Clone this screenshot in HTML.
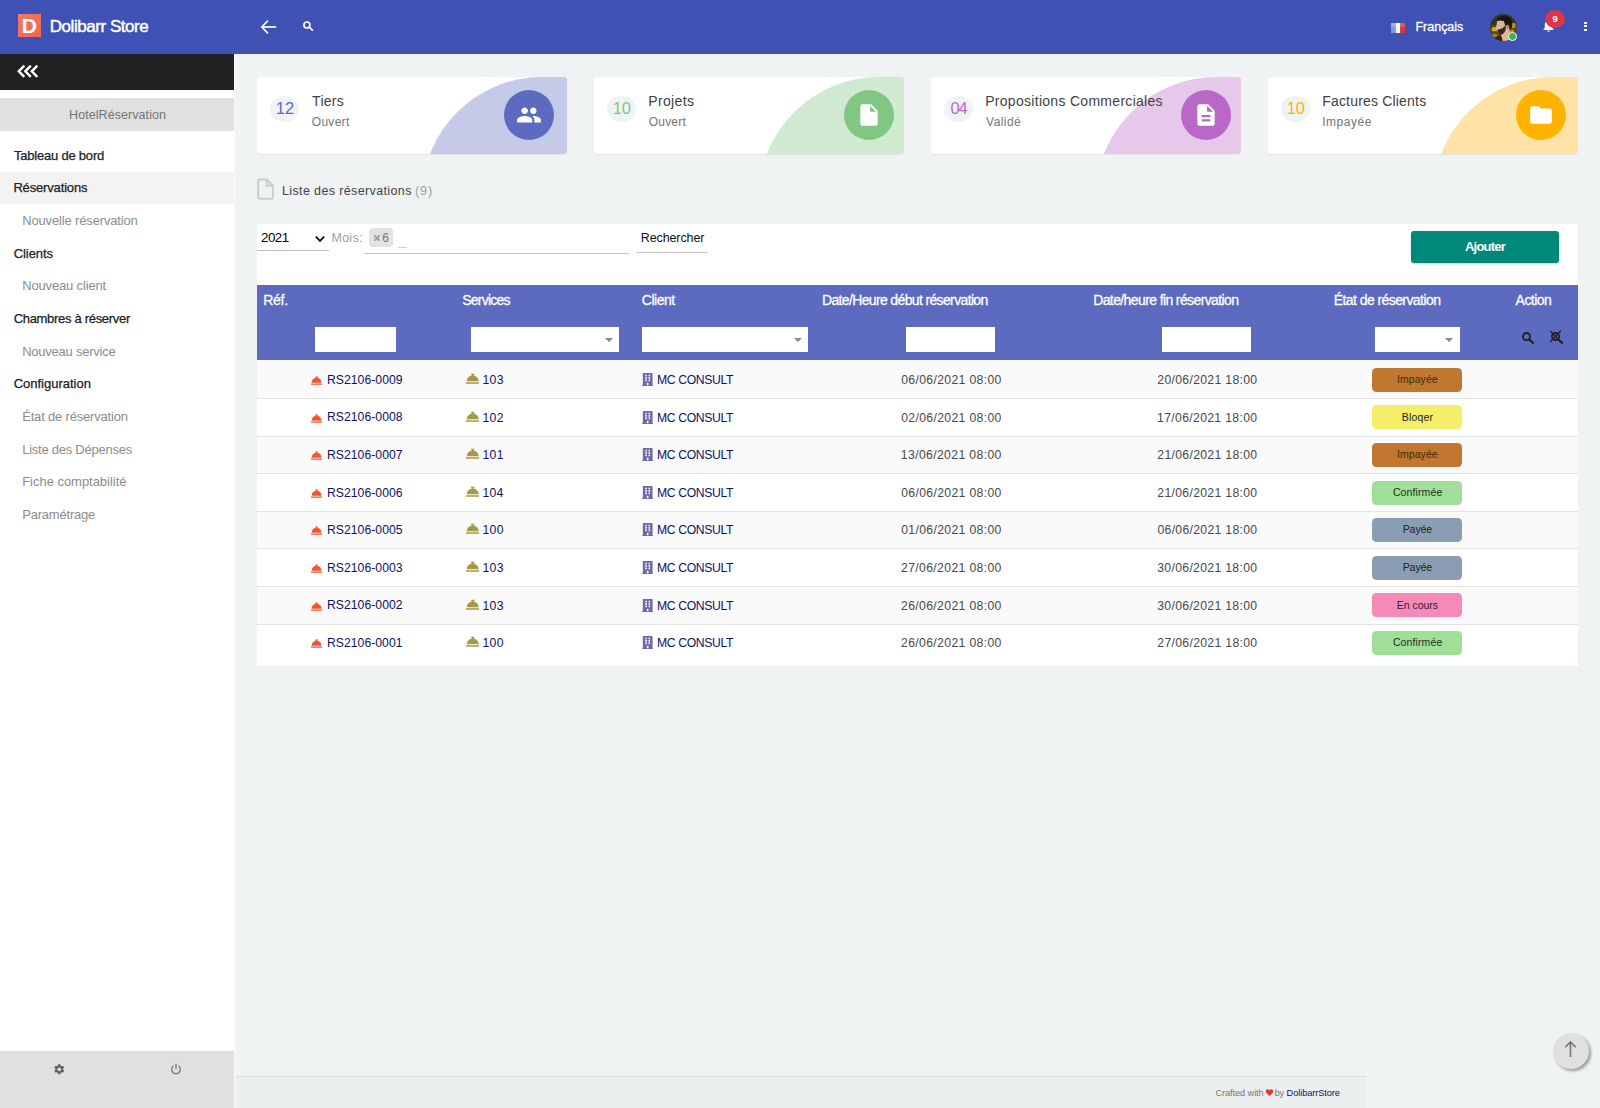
<!DOCTYPE html>
<html lang="fr">
<head>
<meta charset="utf-8">
<title>Liste des réservations</title>
<style>
html,body{margin:0;padding:0;}
body{width:1600px;height:1108px;position:relative;overflow:hidden;background:#f0f3f4;font-family:"Liberation Sans",sans-serif;}
.b{position:absolute;display:block;}
.t{position:absolute;white-space:pre;font-family:"Liberation Sans",sans-serif;}
.card{background:#fff;border-radius:3px;overflow:hidden;box-shadow:0 1px 1px rgba(0,0,0,.06);}
</style>
</head>
<body>
<!-- shapes -->
<div class="b" style="left:0px;top:54px;width:234px;height:1054px;background:#fff;"></div>
<div class="b" style="left:234px;top:54px;width:2px;height:1054px;background:linear-gradient(90deg,#f9fbfb,#f0f3f4);"></div>
<div class="b" style="left:0px;top:54px;width:234px;height:36px;background:#212121;"></div>
<div class="b" style="left:0px;top:98px;width:234px;height:33px;background:#e0e0e0;"></div>
<div class="b" style="left:0px;top:171.5px;width:234px;height:32.5px;background:#f3f3f3;"></div>
<div class="b" style="left:0px;top:1051px;width:234px;height:57px;background:#e0e0e0;"></div>
<div class="b" style="left:0px;top:0px;width:1600px;height:54px;background:#3f51b5;"></div>
<div class="b" style="left:18px;top:14px;width:23px;height:23px;background:linear-gradient(135deg,#f27a66,#ec6555);"></div>
<div class="b" style="left:235px;top:1076px;width:1131px;height:32px;background:#eceff0;border-top:1px solid #dcdfe0;box-sizing:border-box;"></div>
<div class="b card" style="left:257px;top:77px;width:310px;height:77px;"><div class="b" style="left:165.3px;top:0;width:150px;height:125px;border-radius:120px 0 0 0;background:#c5cae9"></div><div class="b" style="left:12.5px;top:19px;width:29px;height:25.5px;border-radius:50%;background:#f0f3f4"></div><div class="b" style="left:247px;top:12.8px;width:50px;height:50px;border-radius:50%;background:#5c6bc0"></div><div class="b" style="left:259px;top:25.3px;width:26px;height:26px"><svg viewBox="0 0 24 24" width="26" height="26"><path fill="#fff" d="M16 11c1.66 0 2.990-1.340 2.990-3S17.660 5 16 5c-1.660 0-3 1.340-3 3s1.340 3 3 3zm-8 0c1.660 0 2.990-1.340 2.990-3S9.660 5 8 5C6.340 5 5 6.340 5 8s1.340 3 3 3zm0 2c-2.330 0-7 1.170-7 3.500V19h14v-2.500c0-2.330-4.670-3.500-7-3.500zm8 0c-.290 0-.620.020-.970.050 1.160.840 1.970 1.970 1.970 3.450V19h6v-2.500c0-2.330-4.670-3.500-7-3.500z"/></svg></div></div>
<div class="b card" style="left:594px;top:77px;width:310px;height:77px;"><div class="b" style="left:165.3px;top:0;width:150px;height:125px;border-radius:120px 0 0 0;background:#d0e9d1"></div><div class="b" style="left:12.5px;top:19px;width:29px;height:25.5px;border-radius:50%;background:#f0f3f4"></div><div class="b" style="left:250px;top:12.8px;width:50px;height:50px;border-radius:50%;background:#81c784"></div><div class="b" style="left:262px;top:25.3px;width:26px;height:26px"><svg viewBox="0 0 24 24" width="26" height="26"><path fill="#fff" d="M6 2c-1.100 0-1.990.900-1.990 2L4 20c0 1.100.890 2 1.990 2H18c1.100 0 2-.900 2-2V8l-6-6H6zm7 7V3.500L18.500 9H13z"/></svg></div></div>
<div class="b card" style="left:931px;top:77px;width:310px;height:77px;"><div class="b" style="left:165.3px;top:0;width:150px;height:125px;border-radius:120px 0 0 0;background:#e6c8ea"></div><div class="b" style="left:12.5px;top:19px;width:29px;height:25.5px;border-radius:50%;background:#f0f3f4"></div><div class="b" style="left:250px;top:12.8px;width:50px;height:50px;border-radius:50%;background:#ba68c8"></div><div class="b" style="left:262px;top:25.3px;width:26px;height:26px"><svg viewBox="0 0 24 24" width="26" height="26"><path fill="#fff" d="M14 2H6c-1.100 0-1.990.900-1.990 2L4 20c0 1.100.890 2 1.990 2H18c1.100 0 2-.900 2-2V8l-6-6zm2 16H8v-2h8v2zm0-4H8v-2h8v2zm-3-5V3.500L18.500 9H13z"/></svg></div></div>
<div class="b card" style="left:1268px;top:77px;width:310px;height:77px;"><div class="b" style="left:165.3px;top:0;width:150px;height:125px;border-radius:120px 0 0 0;background:#ffe3a6"></div><div class="b" style="left:12.5px;top:19px;width:29px;height:25.5px;border-radius:50%;background:#f0f3f4"></div><div class="b" style="left:248px;top:12.8px;width:50px;height:50px;border-radius:50%;background:#ffb300"></div><div class="b" style="left:260px;top:25.3px;width:26px;height:26px"><svg viewBox="0 0 24 24" width="26" height="26"><path fill="#fff" d="M10 4H4c-1.100 0-1.990.900-1.990 2L2 18c0 1.100.900 2 2 2h16c1.100 0 2-.900 2-2V8c0-1.100-.900-2-2-2h-8l-2-2z"/></svg></div></div>
<div class="b" style="left:257px;top:224px;width:1321px;height:442px;background:#fff;"></div>
<div class="b" style="left:257px;top:250px;width:72px;height:1px;background:#bdbdbd;"></div>
<div class="b" style="left:364px;top:253px;width:265px;height:1px;background:#c4c4c4;"></div>
<div class="b" style="left:369px;top:228px;width:24px;height:19px;background:#e2e2e2;border-radius:4px;"></div>
<div class="b" style="left:398px;top:247px;width:9px;height:1px;background:#d0d0d0;"></div>
<div class="b" style="left:636px;top:252px;width:72px;height:1px;background:#c4c4c4;"></div>
<div class="b" style="left:1411px;top:231px;width:148px;height:32px;background:#00897b;border-radius:3px;box-shadow:0 1px 2px rgba(0,0,0,.2);"></div>
<div class="b" style="left:257px;top:285px;width:1321px;height:75px;background:#5c6bc0;"></div>
<div class="b" style="left:315px;top:327px;width:81px;height:25px;background:#fff;"></div>
<div class="b" style="left:470.75px;top:327px;width:148.5px;height:25px;background:#fff;"></div>
<div class="b" style="left:641.75px;top:327px;width:166.25px;height:25px;background:#fff;"></div>
<div class="b" style="left:905.75px;top:327px;width:89.5px;height:25px;background:#fff;"></div>
<div class="b" style="left:1162px;top:327px;width:89.25px;height:25px;background:#fff;"></div>
<div class="b" style="left:1375px;top:327px;width:85px;height:25px;background:#fff;"></div>
<div class="b" style="left:605.25px;top:338px;width:0;height:0;border-left:4px solid transparent;border-right:4px solid transparent;border-top:4.5px solid #888"></div>
<div class="b" style="left:793.5px;top:338px;width:0;height:0;border-left:4px solid transparent;border-right:4px solid transparent;border-top:4.5px solid #888"></div>
<div class="b" style="left:1445.4px;top:338px;width:0;height:0;border-left:4px solid transparent;border-right:4px solid transparent;border-top:4.5px solid #888"></div>
<div class="b" style="left:257px;top:360px;width:1321px;height:38px;background:#fafafa;"></div>
<div class="b" style="left:257px;top:398px;width:1321px;height:1px;background:#e2e2e2;"></div>
<div class="b" style="left:257px;top:436px;width:1321px;height:37px;background:#fafafa;"></div>
<div class="b" style="left:257px;top:436px;width:1321px;height:1px;background:#e2e2e2;"></div>
<div class="b" style="left:257px;top:473px;width:1321px;height:1px;background:#e2e2e2;"></div>
<div class="b" style="left:257px;top:511px;width:1321px;height:37px;background:#fafafa;"></div>
<div class="b" style="left:257px;top:511px;width:1321px;height:1px;background:#e2e2e2;"></div>
<div class="b" style="left:257px;top:548px;width:1321px;height:1px;background:#e2e2e2;"></div>
<div class="b" style="left:257px;top:586px;width:1321px;height:38px;background:#fafafa;"></div>
<div class="b" style="left:257px;top:586px;width:1321px;height:1px;background:#e2e2e2;"></div>
<div class="b" style="left:257px;top:624px;width:1321px;height:1px;background:#e2e2e2;"></div>
<svg class="b" style="left:311px;top:374.50px" width="11.2" height="11.2" viewBox="0 0 512 512"><path fill="#f2552f" d="M288 130.540V112h16c8.840 0 16-7.160 16-16V80c0-8.840-7.160-16-16-16h-96c-8.840 0-16 7.160-16 16v16c0 8.840 7.160 16 16 16h16v18.540C115.490 146.110 32 239.180 32 352h448c0-112.820-83.490-205.890-192-221.460zM496 384H16c-8.840 0-16 7.160-16 16v32c0 8.840 7.160 16 16 16h480c8.840 0 16-7.160 16-16v-32c0-8.840-7.160-16-16-16z"/></svg>
<svg class="b" style="left:465.5px;top:372.30px" width="13.5" height="13.5" viewBox="0 0 512 512"><path fill="#a69845" d="M288 130.540V112h16c8.840 0 16-7.160 16-16V80c0-8.840-7.160-16-16-16h-96c-8.840 0-16 7.160-16 16v16c0 8.840 7.160 16 16 16h16v18.540C115.490 146.110 32 239.180 32 352h448c0-112.820-83.490-205.890-192-221.460zM496 384H16c-8.840 0-16 7.160-16 16v32c0 8.840 7.160 16 16 16h480c8.840 0 16-7.160 16-16v-32c0-8.840-7.160-16-16-16z"/></svg>
<svg class="b" style="left:642.1px;top:372.50px" width="11.4" height="13" viewBox="0 0 448 512"><path fill="#6c6aa8" d="M436 480h-20V24c0-13.255-10.745-24-24-24H56C42.745 0 32 10.745 32 24v456H12c-6.627 0-12 5.373-12 12v20h448v-20c0-6.627-5.373-12-12-12zM128 76c0-6.627 5.373-12 12-12h40c6.627 0 12 5.373 12 12v40c0 6.627-5.373 12-12 12h-40c-6.627 0-12-5.373-12-12V76zm0 96c0-6.627 5.373-12 12-12h40c6.627 0 12 5.373 12 12v40c0 6.627-5.373 12-12 12h-40c-6.627 0-12-5.373-12-12v-40zm52 148h-40c-6.627 0-12-5.373-12-12v-40c0-6.627 5.373-12 12-12h40c6.627 0 12 5.373 12 12v40c0 6.627-5.373 12-12 12zm76 160h-64v-84c0-6.627 5.373-12 12-12h40c6.627 0 12 5.373 12 12v84zm64-172c0 6.627-5.373 12-12 12h-40c-6.627 0-12-5.373-12-12v-40c0-6.627 5.373-12 12-12h40c6.627 0 12 5.373 12 12v40zm0-96c0 6.627-5.373 12-12 12h-40c-6.627 0-12-5.373-12-12v-40c0-6.627 5.373-12 12-12h40c6.627 0 12 5.373 12 12v40zm0-96c0 6.627-5.373 12-12 12h-40c-6.627 0-12-5.373-12-12V76c0-6.627 5.373-12 12-12h40c6.627 0 12 5.373 12 12v40z"/></svg>
<div class="b" style="left:1372px;top:368px;width:90px;height:24px;background:#c0772f;border-radius:4.5px;"></div>
<svg class="b" style="left:311px;top:412.50px" width="11.2" height="11.2" viewBox="0 0 512 512"><path fill="#f2552f" d="M288 130.540V112h16c8.840 0 16-7.160 16-16V80c0-8.840-7.160-16-16-16h-96c-8.840 0-16 7.160-16 16v16c0 8.840 7.160 16 16 16h16v18.540C115.490 146.110 32 239.180 32 352h448c0-112.820-83.490-205.890-192-221.460zM496 384H16c-8.840 0-16 7.160-16 16v32c0 8.840 7.160 16 16 16h480c8.840 0 16-7.160 16-16v-32c0-8.840-7.160-16-16-16z"/></svg>
<svg class="b" style="left:465.5px;top:410.30px" width="13.5" height="13.5" viewBox="0 0 512 512"><path fill="#a69845" d="M288 130.540V112h16c8.840 0 16-7.160 16-16V80c0-8.840-7.160-16-16-16h-96c-8.840 0-16 7.160-16 16v16c0 8.840 7.160 16 16 16h16v18.540C115.490 146.110 32 239.180 32 352h448c0-112.820-83.490-205.890-192-221.460zM496 384H16c-8.840 0-16 7.160-16 16v32c0 8.840 7.160 16 16 16h480c8.840 0 16-7.160 16-16v-32c0-8.840-7.160-16-16-16z"/></svg>
<svg class="b" style="left:642.1px;top:410.50px" width="11.4" height="13" viewBox="0 0 448 512"><path fill="#6c6aa8" d="M436 480h-20V24c0-13.255-10.745-24-24-24H56C42.745 0 32 10.745 32 24v456H12c-6.627 0-12 5.373-12 12v20h448v-20c0-6.627-5.373-12-12-12zM128 76c0-6.627 5.373-12 12-12h40c6.627 0 12 5.373 12 12v40c0 6.627-5.373 12-12 12h-40c-6.627 0-12-5.373-12-12V76zm0 96c0-6.627 5.373-12 12-12h40c6.627 0 12 5.373 12 12v40c0 6.627-5.373 12-12 12h-40c-6.627 0-12-5.373-12-12v-40zm52 148h-40c-6.627 0-12-5.373-12-12v-40c0-6.627 5.373-12 12-12h40c6.627 0 12 5.373 12 12v40c0 6.627-5.373 12-12 12zm76 160h-64v-84c0-6.627 5.373-12 12-12h40c6.627 0 12 5.373 12 12v84zm64-172c0 6.627-5.373 12-12 12h-40c-6.627 0-12-5.373-12-12v-40c0-6.627 5.373-12 12-12h40c6.627 0 12 5.373 12 12v40zm0-96c0 6.627-5.373 12-12 12h-40c-6.627 0-12-5.373-12-12v-40c0-6.627 5.373-12 12-12h40c6.627 0 12 5.373 12 12v40zm0-96c0 6.627-5.373 12-12 12h-40c-6.627 0-12-5.373-12-12V76c0-6.627 5.373-12 12-12h40c6.627 0 12 5.373 12 12v40z"/></svg>
<div class="b" style="left:1372px;top:405px;width:90px;height:24px;background:#f4ee6a;border-radius:4.5px;"></div>
<svg class="b" style="left:311px;top:449.50px" width="11.2" height="11.2" viewBox="0 0 512 512"><path fill="#f2552f" d="M288 130.540V112h16c8.840 0 16-7.160 16-16V80c0-8.840-7.160-16-16-16h-96c-8.840 0-16 7.160-16 16v16c0 8.840 7.160 16 16 16h16v18.540C115.490 146.110 32 239.180 32 352h448c0-112.820-83.490-205.890-192-221.460zM496 384H16c-8.840 0-16 7.160-16 16v32c0 8.840 7.160 16 16 16h480c8.840 0 16-7.160 16-16v-32c0-8.840-7.160-16-16-16z"/></svg>
<svg class="b" style="left:465.5px;top:447.30px" width="13.5" height="13.5" viewBox="0 0 512 512"><path fill="#a69845" d="M288 130.540V112h16c8.840 0 16-7.160 16-16V80c0-8.840-7.160-16-16-16h-96c-8.840 0-16 7.160-16 16v16c0 8.840 7.160 16 16 16h16v18.540C115.490 146.110 32 239.180 32 352h448c0-112.820-83.490-205.890-192-221.460zM496 384H16c-8.840 0-16 7.160-16 16v32c0 8.840 7.160 16 16 16h480c8.840 0 16-7.160 16-16v-32c0-8.840-7.160-16-16-16z"/></svg>
<svg class="b" style="left:642.1px;top:447.50px" width="11.4" height="13" viewBox="0 0 448 512"><path fill="#6c6aa8" d="M436 480h-20V24c0-13.255-10.745-24-24-24H56C42.745 0 32 10.745 32 24v456H12c-6.627 0-12 5.373-12 12v20h448v-20c0-6.627-5.373-12-12-12zM128 76c0-6.627 5.373-12 12-12h40c6.627 0 12 5.373 12 12v40c0 6.627-5.373 12-12 12h-40c-6.627 0-12-5.373-12-12V76zm0 96c0-6.627 5.373-12 12-12h40c6.627 0 12 5.373 12 12v40c0 6.627-5.373 12-12 12h-40c-6.627 0-12-5.373-12-12v-40zm52 148h-40c-6.627 0-12-5.373-12-12v-40c0-6.627 5.373-12 12-12h40c6.627 0 12 5.373 12 12v40c0 6.627-5.373 12-12 12zm76 160h-64v-84c0-6.627 5.373-12 12-12h40c6.627 0 12 5.373 12 12v84zm64-172c0 6.627-5.373 12-12 12h-40c-6.627 0-12-5.373-12-12v-40c0-6.627 5.373-12 12-12h40c6.627 0 12 5.373 12 12v40zm0-96c0 6.627-5.373 12-12 12h-40c-6.627 0-12-5.373-12-12v-40c0-6.627 5.373-12 12-12h40c6.627 0 12 5.373 12 12v40zm0-96c0 6.627-5.373 12-12 12h-40c-6.627 0-12-5.373-12-12V76c0-6.627 5.373-12 12-12h40c6.627 0 12 5.373 12 12v40z"/></svg>
<div class="b" style="left:1372px;top:443px;width:90px;height:24px;background:#c0772f;border-radius:4.5px;"></div>
<svg class="b" style="left:311px;top:487.50px" width="11.2" height="11.2" viewBox="0 0 512 512"><path fill="#f2552f" d="M288 130.540V112h16c8.840 0 16-7.160 16-16V80c0-8.840-7.160-16-16-16h-96c-8.840 0-16 7.160-16 16v16c0 8.840 7.160 16 16 16h16v18.540C115.490 146.110 32 239.180 32 352h448c0-112.820-83.490-205.890-192-221.460zM496 384H16c-8.840 0-16 7.160-16 16v32c0 8.840 7.160 16 16 16h480c8.840 0 16-7.160 16-16v-32c0-8.840-7.160-16-16-16z"/></svg>
<svg class="b" style="left:465.5px;top:485.30px" width="13.5" height="13.5" viewBox="0 0 512 512"><path fill="#a69845" d="M288 130.540V112h16c8.840 0 16-7.160 16-16V80c0-8.840-7.160-16-16-16h-96c-8.840 0-16 7.160-16 16v16c0 8.840 7.160 16 16 16h16v18.540C115.490 146.110 32 239.180 32 352h448c0-112.820-83.490-205.890-192-221.460zM496 384H16c-8.840 0-16 7.160-16 16v32c0 8.840 7.160 16 16 16h480c8.840 0 16-7.160 16-16v-32c0-8.840-7.160-16-16-16z"/></svg>
<svg class="b" style="left:642.1px;top:485.50px" width="11.4" height="13" viewBox="0 0 448 512"><path fill="#6c6aa8" d="M436 480h-20V24c0-13.255-10.745-24-24-24H56C42.745 0 32 10.745 32 24v456H12c-6.627 0-12 5.373-12 12v20h448v-20c0-6.627-5.373-12-12-12zM128 76c0-6.627 5.373-12 12-12h40c6.627 0 12 5.373 12 12v40c0 6.627-5.373 12-12 12h-40c-6.627 0-12-5.373-12-12V76zm0 96c0-6.627 5.373-12 12-12h40c6.627 0 12 5.373 12 12v40c0 6.627-5.373 12-12 12h-40c-6.627 0-12-5.373-12-12v-40zm52 148h-40c-6.627 0-12-5.373-12-12v-40c0-6.627 5.373-12 12-12h40c6.627 0 12 5.373 12 12v40c0 6.627-5.373 12-12 12zm76 160h-64v-84c0-6.627 5.373-12 12-12h40c6.627 0 12 5.373 12 12v84zm64-172c0 6.627-5.373 12-12 12h-40c-6.627 0-12-5.373-12-12v-40c0-6.627 5.373-12 12-12h40c6.627 0 12 5.373 12 12v40zm0-96c0 6.627-5.373 12-12 12h-40c-6.627 0-12-5.373-12-12v-40c0-6.627 5.373-12 12-12h40c6.627 0 12 5.373 12 12v40zm0-96c0 6.627-5.373 12-12 12h-40c-6.627 0-12-5.373-12-12V76c0-6.627 5.373-12 12-12h40c6.627 0 12 5.373 12 12v40z"/></svg>
<div class="b" style="left:1372px;top:481px;width:90px;height:24px;background:#a0df98;border-radius:4.5px;"></div>
<svg class="b" style="left:311px;top:524.50px" width="11.2" height="11.2" viewBox="0 0 512 512"><path fill="#f2552f" d="M288 130.540V112h16c8.840 0 16-7.160 16-16V80c0-8.840-7.160-16-16-16h-96c-8.840 0-16 7.160-16 16v16c0 8.840 7.160 16 16 16h16v18.540C115.490 146.110 32 239.180 32 352h448c0-112.820-83.490-205.890-192-221.460zM496 384H16c-8.840 0-16 7.160-16 16v32c0 8.840 7.160 16 16 16h480c8.840 0 16-7.160 16-16v-32c0-8.840-7.160-16-16-16z"/></svg>
<svg class="b" style="left:465.5px;top:522.30px" width="13.5" height="13.5" viewBox="0 0 512 512"><path fill="#a69845" d="M288 130.540V112h16c8.840 0 16-7.160 16-16V80c0-8.840-7.160-16-16-16h-96c-8.840 0-16 7.160-16 16v16c0 8.840 7.160 16 16 16h16v18.540C115.490 146.110 32 239.180 32 352h448c0-112.820-83.490-205.890-192-221.460zM496 384H16c-8.840 0-16 7.160-16 16v32c0 8.840 7.160 16 16 16h480c8.840 0 16-7.160 16-16v-32c0-8.840-7.160-16-16-16z"/></svg>
<svg class="b" style="left:642.1px;top:522.50px" width="11.4" height="13" viewBox="0 0 448 512"><path fill="#6c6aa8" d="M436 480h-20V24c0-13.255-10.745-24-24-24H56C42.745 0 32 10.745 32 24v456H12c-6.627 0-12 5.373-12 12v20h448v-20c0-6.627-5.373-12-12-12zM128 76c0-6.627 5.373-12 12-12h40c6.627 0 12 5.373 12 12v40c0 6.627-5.373 12-12 12h-40c-6.627 0-12-5.373-12-12V76zm0 96c0-6.627 5.373-12 12-12h40c6.627 0 12 5.373 12 12v40c0 6.627-5.373 12-12 12h-40c-6.627 0-12-5.373-12-12v-40zm52 148h-40c-6.627 0-12-5.373-12-12v-40c0-6.627 5.373-12 12-12h40c6.627 0 12 5.373 12 12v40c0 6.627-5.373 12-12 12zm76 160h-64v-84c0-6.627 5.373-12 12-12h40c6.627 0 12 5.373 12 12v84zm64-172c0 6.627-5.373 12-12 12h-40c-6.627 0-12-5.373-12-12v-40c0-6.627 5.373-12 12-12h40c6.627 0 12 5.373 12 12v40zm0-96c0 6.627-5.373 12-12 12h-40c-6.627 0-12-5.373-12-12v-40c0-6.627 5.373-12 12-12h40c6.627 0 12 5.373 12 12v40zm0-96c0 6.627-5.373 12-12 12h-40c-6.627 0-12-5.373-12-12V76c0-6.627 5.373-12 12-12h40c6.627 0 12 5.373 12 12v40z"/></svg>
<div class="b" style="left:1372px;top:518px;width:90px;height:24px;background:#8a9db3;border-radius:4.5px;"></div>
<svg class="b" style="left:311px;top:562.50px" width="11.2" height="11.2" viewBox="0 0 512 512"><path fill="#f2552f" d="M288 130.540V112h16c8.840 0 16-7.160 16-16V80c0-8.840-7.160-16-16-16h-96c-8.840 0-16 7.160-16 16v16c0 8.840 7.160 16 16 16h16v18.540C115.490 146.110 32 239.180 32 352h448c0-112.820-83.490-205.890-192-221.460zM496 384H16c-8.840 0-16 7.160-16 16v32c0 8.840 7.160 16 16 16h480c8.840 0 16-7.160 16-16v-32c0-8.840-7.160-16-16-16z"/></svg>
<svg class="b" style="left:465.5px;top:560.30px" width="13.5" height="13.5" viewBox="0 0 512 512"><path fill="#a69845" d="M288 130.540V112h16c8.840 0 16-7.160 16-16V80c0-8.840-7.160-16-16-16h-96c-8.840 0-16 7.160-16 16v16c0 8.840 7.160 16 16 16h16v18.540C115.490 146.110 32 239.180 32 352h448c0-112.820-83.490-205.890-192-221.460zM496 384H16c-8.840 0-16 7.160-16 16v32c0 8.840 7.160 16 16 16h480c8.840 0 16-7.160 16-16v-32c0-8.840-7.160-16-16-16z"/></svg>
<svg class="b" style="left:642.1px;top:560.50px" width="11.4" height="13" viewBox="0 0 448 512"><path fill="#6c6aa8" d="M436 480h-20V24c0-13.255-10.745-24-24-24H56C42.745 0 32 10.745 32 24v456H12c-6.627 0-12 5.373-12 12v20h448v-20c0-6.627-5.373-12-12-12zM128 76c0-6.627 5.373-12 12-12h40c6.627 0 12 5.373 12 12v40c0 6.627-5.373 12-12 12h-40c-6.627 0-12-5.373-12-12V76zm0 96c0-6.627 5.373-12 12-12h40c6.627 0 12 5.373 12 12v40c0 6.627-5.373 12-12 12h-40c-6.627 0-12-5.373-12-12v-40zm52 148h-40c-6.627 0-12-5.373-12-12v-40c0-6.627 5.373-12 12-12h40c6.627 0 12 5.373 12 12v40c0 6.627-5.373 12-12 12zm76 160h-64v-84c0-6.627 5.373-12 12-12h40c6.627 0 12 5.373 12 12v84zm64-172c0 6.627-5.373 12-12 12h-40c-6.627 0-12-5.373-12-12v-40c0-6.627 5.373-12 12-12h40c6.627 0 12 5.373 12 12v40zm0-96c0 6.627-5.373 12-12 12h-40c-6.627 0-12-5.373-12-12v-40c0-6.627 5.373-12 12-12h40c6.627 0 12 5.373 12 12v40zm0-96c0 6.627-5.373 12-12 12h-40c-6.627 0-12-5.373-12-12V76c0-6.627 5.373-12 12-12h40c6.627 0 12 5.373 12 12v40z"/></svg>
<div class="b" style="left:1372px;top:556px;width:90px;height:24px;background:#8a9db3;border-radius:4.5px;"></div>
<svg class="b" style="left:311px;top:600.50px" width="11.2" height="11.2" viewBox="0 0 512 512"><path fill="#f2552f" d="M288 130.540V112h16c8.840 0 16-7.160 16-16V80c0-8.840-7.160-16-16-16h-96c-8.840 0-16 7.160-16 16v16c0 8.840 7.160 16 16 16h16v18.540C115.490 146.110 32 239.180 32 352h448c0-112.820-83.490-205.890-192-221.460zM496 384H16c-8.840 0-16 7.160-16 16v32c0 8.840 7.160 16 16 16h480c8.840 0 16-7.160 16-16v-32c0-8.840-7.160-16-16-16z"/></svg>
<svg class="b" style="left:465.5px;top:598.30px" width="13.5" height="13.5" viewBox="0 0 512 512"><path fill="#a69845" d="M288 130.540V112h16c8.840 0 16-7.160 16-16V80c0-8.840-7.160-16-16-16h-96c-8.840 0-16 7.160-16 16v16c0 8.840 7.160 16 16 16h16v18.540C115.490 146.110 32 239.180 32 352h448c0-112.820-83.490-205.890-192-221.460zM496 384H16c-8.840 0-16 7.160-16 16v32c0 8.840 7.160 16 16 16h480c8.840 0 16-7.160 16-16v-32c0-8.840-7.160-16-16-16z"/></svg>
<svg class="b" style="left:642.1px;top:598.50px" width="11.4" height="13" viewBox="0 0 448 512"><path fill="#6c6aa8" d="M436 480h-20V24c0-13.255-10.745-24-24-24H56C42.745 0 32 10.745 32 24v456H12c-6.627 0-12 5.373-12 12v20h448v-20c0-6.627-5.373-12-12-12zM128 76c0-6.627 5.373-12 12-12h40c6.627 0 12 5.373 12 12v40c0 6.627-5.373 12-12 12h-40c-6.627 0-12-5.373-12-12V76zm0 96c0-6.627 5.373-12 12-12h40c6.627 0 12 5.373 12 12v40c0 6.627-5.373 12-12 12h-40c-6.627 0-12-5.373-12-12v-40zm52 148h-40c-6.627 0-12-5.373-12-12v-40c0-6.627 5.373-12 12-12h40c6.627 0 12 5.373 12 12v40c0 6.627-5.373 12-12 12zm76 160h-64v-84c0-6.627 5.373-12 12-12h40c6.627 0 12 5.373 12 12v84zm64-172c0 6.627-5.373 12-12 12h-40c-6.627 0-12-5.373-12-12v-40c0-6.627 5.373-12 12-12h40c6.627 0 12 5.373 12 12v40zm0-96c0 6.627-5.373 12-12 12h-40c-6.627 0-12-5.373-12-12v-40c0-6.627 5.373-12 12-12h40c6.627 0 12 5.373 12 12v40zm0-96c0 6.627-5.373 12-12 12h-40c-6.627 0-12-5.373-12-12V76c0-6.627 5.373-12 12-12h40c6.627 0 12 5.373 12 12v40z"/></svg>
<div class="b" style="left:1372px;top:593px;width:90px;height:24px;background:#f589b7;border-radius:4.5px;"></div>
<svg class="b" style="left:311px;top:637.50px" width="11.2" height="11.2" viewBox="0 0 512 512"><path fill="#f2552f" d="M288 130.540V112h16c8.840 0 16-7.160 16-16V80c0-8.840-7.160-16-16-16h-96c-8.840 0-16 7.160-16 16v16c0 8.840 7.160 16 16 16h16v18.540C115.490 146.110 32 239.180 32 352h448c0-112.820-83.490-205.890-192-221.460zM496 384H16c-8.840 0-16 7.160-16 16v32c0 8.840 7.160 16 16 16h480c8.840 0 16-7.160 16-16v-32c0-8.840-7.160-16-16-16z"/></svg>
<svg class="b" style="left:465.5px;top:635.30px" width="13.5" height="13.5" viewBox="0 0 512 512"><path fill="#a69845" d="M288 130.540V112h16c8.840 0 16-7.160 16-16V80c0-8.840-7.160-16-16-16h-96c-8.840 0-16 7.160-16 16v16c0 8.840 7.160 16 16 16h16v18.540C115.490 146.110 32 239.180 32 352h448c0-112.820-83.490-205.890-192-221.460zM496 384H16c-8.840 0-16 7.160-16 16v32c0 8.840 7.160 16 16 16h480c8.840 0 16-7.160 16-16v-32c0-8.840-7.160-16-16-16z"/></svg>
<svg class="b" style="left:642.1px;top:635.50px" width="11.4" height="13" viewBox="0 0 448 512"><path fill="#6c6aa8" d="M436 480h-20V24c0-13.255-10.745-24-24-24H56C42.745 0 32 10.745 32 24v456H12c-6.627 0-12 5.373-12 12v20h448v-20c0-6.627-5.373-12-12-12zM128 76c0-6.627 5.373-12 12-12h40c6.627 0 12 5.373 12 12v40c0 6.627-5.373 12-12 12h-40c-6.627 0-12-5.373-12-12V76zm0 96c0-6.627 5.373-12 12-12h40c6.627 0 12 5.373 12 12v40c0 6.627-5.373 12-12 12h-40c-6.627 0-12-5.373-12-12v-40zm52 148h-40c-6.627 0-12-5.373-12-12v-40c0-6.627 5.373-12 12-12h40c6.627 0 12 5.373 12 12v40c0 6.627-5.373 12-12 12zm76 160h-64v-84c0-6.627 5.373-12 12-12h40c6.627 0 12 5.373 12 12v84zm64-172c0 6.627-5.373 12-12 12h-40c-6.627 0-12-5.373-12-12v-40c0-6.627 5.373-12 12-12h40c6.627 0 12 5.373 12 12v40zm0-96c0 6.627-5.373 12-12 12h-40c-6.627 0-12-5.373-12-12v-40c0-6.627 5.373-12 12-12h40c6.627 0 12 5.373 12 12v40zm0-96c0 6.627-5.373 12-12 12h-40c-6.627 0-12-5.373-12-12V76c0-6.627 5.373-12 12-12h40c6.627 0 12 5.373 12 12v40z"/></svg>
<div class="b" style="left:1372px;top:631px;width:90px;height:24px;background:#a0df98;border-radius:4.5px;"></div>
<!-- icons -->
<span class="t" style="left:21.8px;top:13px;font-size:21px;line-height:25px;font-weight:700;color:#fff;">D</span>
<svg class="b" style="left:16px;top:64px" width="24" height="15" viewBox="0 0 24 15"><g fill="none" stroke="#fff" stroke-width="2.4" stroke-linejoin="miter"><path d="M8.300 1.700 L2.800 7.300 L8.300 12.900"/><path d="M14.800 1.700 L9.300 7.300 L14.800 12.900"/><path d="M21.300 1.700 L15.800 7.300 L21.300 12.900"/></g></svg>
<svg class="b" style="left:258px;top:18px" width="20" height="18" viewBox="0 0 20 18"><g fill="none" stroke="#fff" stroke-width="1.700" stroke-linecap="butt"><path d="M9.900 2.700 L3.900 9 L9.900 15.300"/><path d="M4.200 9 H18.200"/></g></svg>
<svg class="b" style="left:301px;top:19px" width="14" height="14" viewBox="0 0 14 14"><g fill="none" stroke="#fff"><circle cx="5.900" cy="6" r="3" stroke-width="1.700"/><path d="M8.200 8.200 L11.900 11.700" stroke-width="1.700"/></g></svg>
<!-- flag -->
<svg class="b" style="left:1391px;top:23px" width="14" height="10" viewBox="0 0 14 10"><rect x="0" y="0" width="4.700" height="10" fill="#7f9bd6"/><rect x="4.700" y="0" width="4.600" height="10" fill="#f4f4f6"/><rect x="9.300" y="0" width="4.700" height="10" fill="#e2352f"/><rect x="0" y="0" width="14" height="4" fill="#fff" opacity=".18"/></svg>
<!-- avatar -->
<svg class="b" style="left:1490px;top:14px" width="27" height="27" viewBox="0 0 27 27"><defs><clipPath id="av"><circle cx="13.500" cy="13.500" r="13.500"/></clipPath><filter id="bl" x="-30%" y="-30%" width="160%" height="160%"><feGaussianBlur stdDeviation="0.550"/></filter></defs><g clip-path="url(#av)"><rect width="27" height="27" fill="#2f371d"/><g filter="url(#bl)"><rect x="-2" y="11" width="31" height="13" fill="#4f471c"/><ellipse cx="4.200" cy="15.300" rx="2.600" ry="2.200" fill="#d9a521"/><ellipse cx="23.500" cy="11.500" rx="2.200" ry="2.800" fill="#c98a1d"/><ellipse cx="22" cy="17.300" rx="2.200" ry="1.800" fill="#c98a1d"/><ellipse cx="4.500" cy="21.500" rx="3" ry="1.700" fill="#a8861e"/><path d="M2 28 C4 23 8 21.500 12 22 L16 28z" fill="#3c1a1d"/><path d="M13 13 L19.300 11 L20.500 28 L13 28 L11 21z" fill="#e0b896"/><path d="M7 6.500 C9 5 13 5.500 14 6.500 L15.500 12 L15 16 L9 20 L6.500 17 L5.700 13.800 L6.800 10z" fill="#d9b59a"/><ellipse cx="17.800" cy="12.600" rx="1.300" ry="2.200" fill="#b47c54"/><path d="M7.800 15.600 C9.500 15.200 12.500 15.200 14.300 12.300 L15.800 12.500 C16.300 17 13.500 20.800 10.500 20.800 C8.800 20.800 8 18.500 7.300 16.600z" fill="#3b281e"/><path d="M6.800 7 C7 2.500 12 1.300 16 2.300 C21 3.500 23.300 8 21.800 12.500 C21.300 14.500 20.300 15.500 19.700 16.200 C19.800 13 19 10.300 17.300 10.300 C16.300 10.300 15.800 11.500 15.600 12.500 C15 10.500 14.500 8 14 7.200 C12 6.200 9 6.300 6.800 7z" fill="#16130f"/></g></g></svg>
<div class="b" style="left:1508.100px;top:32.100px;width:6.800px;height:6.800px;border-radius:50%;background:#44b04a;border:1px solid #fff;"></div>
<!-- bell + badge -->
<svg class="b" style="left:1541px;top:17.500px" width="15" height="15" viewBox="0 0 24 24"><path fill="#fff" d="M12 22c1.100 0 2-.900 2-2h-4c0 1.100.890 2 2 2zm6-6v-5c0-3.070-1.640-5.640-4.500-6.320V4c0-.830-.670-1.500-1.500-1.500s-1.500.670-1.500 1.500v.680C7.630 5.360 6 7.920 6 11v5l-2 2v1h16v-1l-2-2z"/></svg>
<div class="b" style="left:1545px;top:9.500px;width:20px;height:18.500px;border-radius:50%;background:#dc3545;"></div>
<!-- kebab -->
<div class="b" style="left:1584px;top:21.500px;width:2.600px;height:2.400px;background:#fff;border-radius:.5px"></div>
<div class="b" style="left:1584px;top:25px;width:2.600px;height:2.400px;background:#fff;border-radius:.5px"></div>
<div class="b" style="left:1584px;top:28.500px;width:2.600px;height:2.400px;background:#fff;border-radius:.5px"></div>
<!-- title file icon -->
<svg class="b" style="left:257px;top:178px" width="18" height="23" viewBox="0 0 18 23"><path d="M2.700 1.500 H9.700 L15.900 7.700 V19.200 Q15.900 20.700 14.400 20.700 H2.700 Q1.200 20.700 1.200 19.200 V3 Q1.200 1.500 2.700 1.500z M9.700 1.700 V7.700 H15.700" fill="none" stroke="#cdcdcd" stroke-width="2" stroke-linejoin="round"/></svg>
<!-- select chevron -->
<svg class="b" style="left:314px;top:234px" width="12" height="10" viewBox="0 0 12 10"><path d="M1.800 2.600 L6 6.800 L10.200 2.600" fill="none" stroke="#111" stroke-width="1.900"/></svg>
<!-- tag x -->
<svg class="b" style="left:373px;top:233.500px" width="8" height="8" viewBox="0 0 8 8"><path d="M1.300 1.300 L6.700 6.700 M6.700 1.300 L1.300 6.700" stroke="#9e9e9e" stroke-width="1.900"/></svg>
<!-- table action icons -->
<svg class="b" style="left:1521px;top:331px" width="14" height="14" viewBox="0 0 14 14"><g fill="none" stroke="#1e1e1e"><circle cx="5.500" cy="5.600" r="3.600" stroke-width="1.800"/><path d="M8.200 8.400 L12.700 12.600" stroke-width="2.100"/></g></svg>
<svg class="b" style="left:1548px;top:329px" width="16" height="16" viewBox="0 0 16 16"><g fill="none" stroke="#1e1e1e"><circle cx="7.500" cy="7.500" r="3.600" stroke-width="1.700"/><path d="M10.200 10.300 L14.700 14.500" stroke-width="2"/><path d="M2.300 2 L12.500 12.700 M13 1.800 L2 13" stroke-width="1.300"/></g></svg>
<!-- sidebar footer icons -->
<svg class="b" style="left:52.500px;top:1063px" width="12.500" height="12.500" viewBox="0 0 24 24"><path fill="#616161" d="M19.140 12.940c.040-.300.060-.610.060-.940 0-.320-.020-.640-.070-.940l2.030-1.580c.180-.140.230-.410.120-.610l-1.920-3.320c-.120-.220-.370-.290-.590-.220l-2.390.960c-.500-.380-1.030-.700-1.620-.940l-.360-2.540c-.040-.240-.240-.410-.480-.410h-3.840c-.240 0-.430.170-.470.410l-.360 2.540c-.590.240-1.130.570-1.620.940l-2.390-.960c-.220-.080-.470 0-.590.220L2.740 8.870c-.120.210-.080.470.120.610l2.030 1.580c-.050.300-.090.630-.090.940s.020.640.070.940l-2.030 1.580c-.180.140-.230.410-.120.610l1.920 3.320c.120.220.370.290.590.220l2.390-.960c.500.380 1.030.700 1.620.940l.360 2.540c.050.240.240.410.480.410h3.840c.240 0 .440-.170.470-.410l.360-2.540c.590-.240 1.130-.560 1.620-.940l2.390.960c.220.080.470 0 .590-.220l1.920-3.320c.120-.220.070-.470-.120-.610l-2.010-1.580zM12 15.600c-1.980 0-3.600-1.620-3.600-3.600s1.620-3.600 3.600-3.600 3.600 1.620 3.600 3.600-1.620 3.600-3.600 3.600z"/></svg>
<svg class="b" style="left:170px;top:1063px" width="12" height="12" viewBox="0 0 12 12"><g fill="none" stroke="#757575" stroke-width="1.300"><path d="M3.600 2.800 A4.300 4.300 0 1 0 8.400 2.800"/><path d="M6 0.700 V6"/></g></svg>
<!-- scroll top -->
<div class="b" style="left:1553px;top:1033px;width:36px;height:36px;border-radius:50%;background:#e0e0e0;box-shadow:2px 2px 3px rgba(0,0,0,.36);"></div>
<svg class="b" style="left:1563px;top:1040px" width="16" height="18" viewBox="0 0 16 18"><g fill="none" stroke="#757575" stroke-width="1.600"><path d="M7.500 2 V17"/><path d="M2.300 7.300 L7.500 2 L12.700 7.300"/></g></svg>
<!-- heart -->
<svg class="b" style="left:1264.600px;top:1088px" width="9" height="9" viewBox="0 0 24 24"><path fill="#e53935" d="M12 21.350l-1.450-1.320C5.400 15.360 2 12.280 2 8.500 2 5.420 4.420 3 7.500 3c1.740 0 3.410.810 4.500 2.090C13.090 3.810 14.760 3 16.500 3 19.580 3 22 5.420 22 8.500c0 3.780-3.400 6.860-8.550 11.540L12 21.350z"/></svg>

<!-- texts -->
<span class="t" style="left:49.80px;top:15.00px;font-size:17px;line-height:24px;color:#fff;letter-spacing:-0.460px;-webkit-text-stroke:0.45px #fff;">Dolibarr Store</span>
<span class="t" style="left:1415.46px;top:18.00px;font-size:12.5px;line-height:18px;color:#fff;letter-spacing:-0.007px;-webkit-text-stroke:0.3px #fff;">Français</span>
<span class="t" style="left:69.11px;top:106.00px;font-size:12.5px;line-height:18px;color:#757575;letter-spacing:0.064px;">HotelRéservation</span>
<span class="t" style="left:14.05px;top:147.00px;font-size:13px;line-height:18px;color:#212121;letter-spacing:-0.219px;-webkit-text-stroke:0.25px #212121;">Tableau de bord</span>
<span class="t" style="left:13.38px;top:179.00px;font-size:13px;line-height:18px;color:#212121;letter-spacing:-0.158px;-webkit-text-stroke:0.25px #212121;">Réservations</span>
<span class="t" style="left:22.20px;top:212.00px;font-size:13px;line-height:18px;color:#8c8c8c;letter-spacing:-0.151px;">Nouvelle réservation</span>
<span class="t" style="left:13.65px;top:245.00px;font-size:13px;line-height:18px;color:#212121;letter-spacing:-0.044px;-webkit-text-stroke:0.25px #212121;">Clients</span>
<span class="t" style="left:22.20px;top:277.00px;font-size:13px;line-height:18px;color:#8c8c8c;letter-spacing:-0.152px;">Nouveau client</span>
<span class="t" style="left:13.65px;top:310.00px;font-size:13px;line-height:18px;color:#212121;letter-spacing:-0.305px;-webkit-text-stroke:0.25px #212121;">Chambres à réserver</span>
<span class="t" style="left:22.20px;top:343.00px;font-size:13px;line-height:18px;color:#8c8c8c;letter-spacing:-0.236px;">Nouveau service</span>
<span class="t" style="left:13.65px;top:375.00px;font-size:13px;line-height:18px;color:#212121;letter-spacing:-0.004px;-webkit-text-stroke:0.25px #212121;">Configuration</span>
<span class="t" style="left:22.20px;top:408.00px;font-size:13px;line-height:18px;color:#8c8c8c;letter-spacing:-0.187px;">État de réservation</span>
<span class="t" style="left:22.20px;top:441.00px;font-size:13px;line-height:18px;color:#8c8c8c;letter-spacing:-0.246px;">Liste des Dépenses</span>
<span class="t" style="left:22.20px;top:473.00px;font-size:13px;line-height:18px;color:#8c8c8c;letter-spacing:-0.030px;">Fiche comptabilité</span>
<span class="t" style="left:22.20px;top:506.00px;font-size:13px;line-height:18px;color:#8c8c8c;letter-spacing:-0.204px;">Paramétrage</span>
<span class="t" style="left:275.82px;top:97.00px;font-size:16.5px;line-height:23px;color:#5c6bc0;letter-spacing:-0.114px;">12</span>
<span class="t" style="left:312.07px;top:91.00px;font-size:14px;line-height:20px;color:#424242;letter-spacing:0.287px;">Tiers</span>
<span class="t" style="left:311.77px;top:114.00px;font-size:12px;line-height:17px;color:#757575;letter-spacing:0.292px;">Ouvert</span>
<span class="t" style="left:612.82px;top:97.00px;font-size:16.5px;line-height:23px;color:#81c784;letter-spacing:-0.260px;">10</span>
<span class="t" style="left:648.20px;top:91.00px;font-size:14px;line-height:20px;color:#424242;letter-spacing:0.378px;">Projets</span>
<span class="t" style="left:648.77px;top:114.00px;font-size:12px;line-height:17px;color:#757575;letter-spacing:0.192px;">Ouvert</span>
<span class="t" style="left:950.38px;top:97.00px;font-size:16.5px;line-height:23px;color:#ba68c8;letter-spacing:-1.051px;">04</span>
<span class="t" style="left:985.20px;top:91.00px;font-size:14px;line-height:20px;color:#424242;letter-spacing:0.292px;">Propositions Commerciales</span>
<span class="t" style="left:986.11px;top:114.00px;font-size:12px;line-height:17px;color:#757575;letter-spacing:0.434px;">Validé</span>
<span class="t" style="left:1286.82px;top:97.00px;font-size:16.5px;line-height:23px;color:#ffb300;letter-spacing:-0.260px;">10</span>
<span class="t" style="left:1322.20px;top:91.00px;font-size:14px;line-height:20px;color:#424242;letter-spacing:0.187px;">Factures Clients</span>
<span class="t" style="left:1322.20px;top:114.00px;font-size:12px;line-height:17px;color:#757575;letter-spacing:0.528px;">Impayée</span>
<span class="t" style="left:282.01px;top:182.00px;font-size:12.5px;line-height:18px;color:#424242;letter-spacing:0.372px;">Liste des réservations</span>
<span class="t" style="left:415.05px;top:182.00px;font-size:12.5px;line-height:18px;color:#9e9e9e;letter-spacing:0.909px;">(9)</span>
<span class="t" style="left:261.02px;top:228.00px;font-size:13.33px;line-height:19px;color:#000;letter-spacing:-0.510px;">2021</span>
<span class="t" style="left:331.51px;top:229.00px;font-size:12.5px;line-height:18px;color:#9e9e9e;letter-spacing:0.255px;">Mois:</span>
<span class="t" style="left:382.30px;top:230.00px;font-size:12px;line-height:17px;color:#757575;letter-spacing:0.000px;">6</span>
<span class="t" style="left:640.76px;top:229.00px;font-size:12.5px;line-height:18px;color:#111;letter-spacing:-0.109px;">Rechercher</span>
<span class="t" style="left:1464.96px;top:238.00px;font-size:13px;line-height:18px;color:#fff;letter-spacing:-0.766px;font-weight:700;">Ajouter</span>
<span class="t" style="left:263.19px;top:290.00px;font-size:14px;line-height:20px;color:#fff;letter-spacing:-0.238px;-webkit-text-stroke:0.28px #fff;">Réf.</span>
<span class="t" style="left:462.21px;top:290.00px;font-size:14px;line-height:20px;color:#fff;letter-spacing:-0.762px;-webkit-text-stroke:0.28px #fff;">Services</span>
<span class="t" style="left:641.85px;top:290.00px;font-size:14px;line-height:20px;color:#fff;letter-spacing:-0.498px;-webkit-text-stroke:0.28px #fff;">Client</span>
<span class="t" style="left:821.94px;top:290.00px;font-size:14px;line-height:20px;color:#fff;letter-spacing:-0.641px;-webkit-text-stroke:0.28px #fff;">Date/Heure début réservation</span>
<span class="t" style="left:1093.19px;top:290.00px;font-size:14px;line-height:20px;color:#fff;letter-spacing:-0.610px;-webkit-text-stroke:0.28px #fff;">Date/heure fin réservation</span>
<span class="t" style="left:1333.74px;top:290.00px;font-size:14px;line-height:20px;color:#fff;letter-spacing:-0.573px;-webkit-text-stroke:0.28px #fff;">État de réservation</span>
<span class="t" style="left:1515.60px;top:290.00px;font-size:14px;line-height:20px;color:#fff;letter-spacing:-0.556px;-webkit-text-stroke:0.28px #fff;">Action</span>
<span class="t" style="left:327.01px;top:372.00px;font-size:12.2px;line-height:17px;color:#0a1464;letter-spacing:0.033px;">RS2106-0009</span>
<span class="t" style="left:482.48px;top:372.00px;font-size:12.2px;line-height:17px;color:#0a1464;letter-spacing:0.339px;">103</span>
<span class="t" style="left:657.01px;top:372.00px;font-size:12.2px;line-height:17px;color:#0a1464;letter-spacing:-0.368px;">MC CONSULT</span>
<span class="t" style="left:901.21px;top:372.00px;font-size:12.2px;line-height:17px;color:#484848;letter-spacing:0.350px;">06/06/2021 08:00</span>
<span class="t" style="left:1157.32px;top:372.00px;font-size:12.2px;line-height:17px;color:#484848;letter-spacing:0.326px;">20/06/2021 18:00</span>
<span class="t" style="left:1396.99px;top:372.00px;font-size:10.5px;line-height:15px;color:#3d2a12;letter-spacing:0.073px;">Impayée</span>
<span class="t" style="left:327.01px;top:409.00px;font-size:12.2px;line-height:17px;color:#0a1464;letter-spacing:0.034px;">RS2106-0008</span>
<span class="t" style="left:482.48px;top:410.00px;font-size:12.2px;line-height:17px;color:#0a1464;letter-spacing:0.325px;">102</span>
<span class="t" style="left:657.01px;top:410.00px;font-size:12.2px;line-height:17px;color:#0a1464;letter-spacing:-0.368px;">MC CONSULT</span>
<span class="t" style="left:901.21px;top:410.00px;font-size:12.2px;line-height:17px;color:#484848;letter-spacing:0.350px;">02/06/2021 08:00</span>
<span class="t" style="left:1157.08px;top:410.00px;font-size:12.2px;line-height:17px;color:#484848;letter-spacing:0.342px;">17/06/2021 18:00</span>
<span class="t" style="left:1401.68px;top:410.00px;font-size:10.5px;line-height:15px;color:#222;letter-spacing:0.212px;">Bloqer</span>
<span class="t" style="left:327.01px;top:447.00px;font-size:12.2px;line-height:17px;color:#0a1464;letter-spacing:0.032px;">RS2106-0007</span>
<span class="t" style="left:482.48px;top:447.00px;font-size:12.2px;line-height:17px;color:#0a1464;letter-spacing:0.311px;">101</span>
<span class="t" style="left:657.01px;top:447.00px;font-size:12.2px;line-height:17px;color:#0a1464;letter-spacing:-0.368px;">MC CONSULT</span>
<span class="t" style="left:900.83px;top:447.00px;font-size:12.2px;line-height:17px;color:#484848;letter-spacing:0.376px;">13/06/2021 08:00</span>
<span class="t" style="left:1157.32px;top:447.00px;font-size:12.2px;line-height:17px;color:#484848;letter-spacing:0.326px;">21/06/2021 18:00</span>
<span class="t" style="left:1396.99px;top:447.00px;font-size:10.5px;line-height:15px;color:#3d2a12;letter-spacing:0.073px;">Impayée</span>
<span class="t" style="left:327.01px;top:485.00px;font-size:12.2px;line-height:17px;color:#0a1464;letter-spacing:0.034px;">RS2106-0006</span>
<span class="t" style="left:482.48px;top:485.00px;font-size:12.2px;line-height:17px;color:#0a1464;letter-spacing:0.176px;">104</span>
<span class="t" style="left:657.01px;top:485.00px;font-size:12.2px;line-height:17px;color:#0a1464;letter-spacing:-0.368px;">MC CONSULT</span>
<span class="t" style="left:901.21px;top:485.00px;font-size:12.2px;line-height:17px;color:#484848;letter-spacing:0.350px;">06/06/2021 08:00</span>
<span class="t" style="left:1157.32px;top:485.00px;font-size:12.2px;line-height:17px;color:#484848;letter-spacing:0.326px;">21/06/2021 18:00</span>
<span class="t" style="left:1392.93px;top:485.00px;font-size:10.5px;line-height:15px;color:#1f2d1d;letter-spacing:0.112px;">Confirmée</span>
<span class="t" style="left:327.01px;top:522.00px;font-size:12.2px;line-height:17px;color:#0a1464;letter-spacing:0.034px;">RS2106-0005</span>
<span class="t" style="left:482.48px;top:522.00px;font-size:12.2px;line-height:17px;color:#0a1464;letter-spacing:0.318px;">100</span>
<span class="t" style="left:657.01px;top:522.00px;font-size:12.2px;line-height:17px;color:#0a1464;letter-spacing:-0.368px;">MC CONSULT</span>
<span class="t" style="left:901.21px;top:522.00px;font-size:12.2px;line-height:17px;color:#484848;letter-spacing:0.350px;">01/06/2021 08:00</span>
<span class="t" style="left:1157.46px;top:522.00px;font-size:12.2px;line-height:17px;color:#484848;letter-spacing:0.317px;">06/06/2021 18:00</span>
<span class="t" style="left:1402.68px;top:522.00px;font-size:10.5px;line-height:15px;color:#1c2024;letter-spacing:-0.060px;">Payée</span>
<span class="t" style="left:327.01px;top:560.00px;font-size:12.2px;line-height:17px;color:#0a1464;letter-spacing:0.034px;">RS2106-0003</span>
<span class="t" style="left:482.48px;top:560.00px;font-size:12.2px;line-height:17px;color:#0a1464;letter-spacing:0.339px;">103</span>
<span class="t" style="left:657.01px;top:560.00px;font-size:12.2px;line-height:17px;color:#0a1464;letter-spacing:-0.368px;">MC CONSULT</span>
<span class="t" style="left:901.07px;top:560.00px;font-size:12.2px;line-height:17px;color:#484848;letter-spacing:0.360px;">27/06/2021 08:00</span>
<span class="t" style="left:1157.24px;top:560.00px;font-size:12.2px;line-height:17px;color:#484848;letter-spacing:0.331px;">30/06/2021 18:00</span>
<span class="t" style="left:1402.68px;top:560.00px;font-size:10.5px;line-height:15px;color:#1c2024;letter-spacing:-0.060px;">Payée</span>
<span class="t" style="left:327.01px;top:597.00px;font-size:12.2px;line-height:17px;color:#0a1464;letter-spacing:0.032px;">RS2106-0002</span>
<span class="t" style="left:482.48px;top:598.00px;font-size:12.2px;line-height:17px;color:#0a1464;letter-spacing:0.339px;">103</span>
<span class="t" style="left:657.01px;top:598.00px;font-size:12.2px;line-height:17px;color:#0a1464;letter-spacing:-0.368px;">MC CONSULT</span>
<span class="t" style="left:901.07px;top:598.00px;font-size:12.2px;line-height:17px;color:#484848;letter-spacing:0.360px;">26/06/2021 08:00</span>
<span class="t" style="left:1157.24px;top:598.00px;font-size:12.2px;line-height:17px;color:#484848;letter-spacing:0.331px;">30/06/2021 18:00</span>
<span class="t" style="left:1396.68px;top:598.00px;font-size:10.5px;line-height:15px;color:#31202a;letter-spacing:0.002px;">En cours</span>
<span class="t" style="left:327.01px;top:635.00px;font-size:12.2px;line-height:17px;color:#0a1464;letter-spacing:0.029px;">RS2106-0001</span>
<span class="t" style="left:482.48px;top:635.00px;font-size:12.2px;line-height:17px;color:#0a1464;letter-spacing:0.318px;">100</span>
<span class="t" style="left:657.01px;top:635.00px;font-size:12.2px;line-height:17px;color:#0a1464;letter-spacing:-0.368px;">MC CONSULT</span>
<span class="t" style="left:901.07px;top:635.00px;font-size:12.2px;line-height:17px;color:#484848;letter-spacing:0.360px;">26/06/2021 08:00</span>
<span class="t" style="left:1157.32px;top:635.00px;font-size:12.2px;line-height:17px;color:#484848;letter-spacing:0.326px;">27/06/2021 18:00</span>
<span class="t" style="left:1392.93px;top:635.00px;font-size:10.5px;line-height:15px;color:#1f2d1d;letter-spacing:0.112px;">Confirmée</span>
<span class="t" style="left:1215.51px;top:1087.00px;font-size:9.2px;line-height:13px;color:#757575;letter-spacing:-0.074px;">Crafted with</span>
<span class="t" style="left:1274.81px;top:1087.00px;font-size:9.2px;line-height:13px;color:#757575;letter-spacing:-0.436px;">by</span>
<span class="t" style="left:1286.60px;top:1087.00px;font-size:9.2px;line-height:13px;color:#0a1464;letter-spacing:-0.067px;">DolibarrStore</span>
<span class="t" style="left:1552.56px;top:12.00px;font-size:9.5px;line-height:13px;color:#fff;letter-spacing:0.000px;font-weight:700;">9</span>
</body>
</html>
